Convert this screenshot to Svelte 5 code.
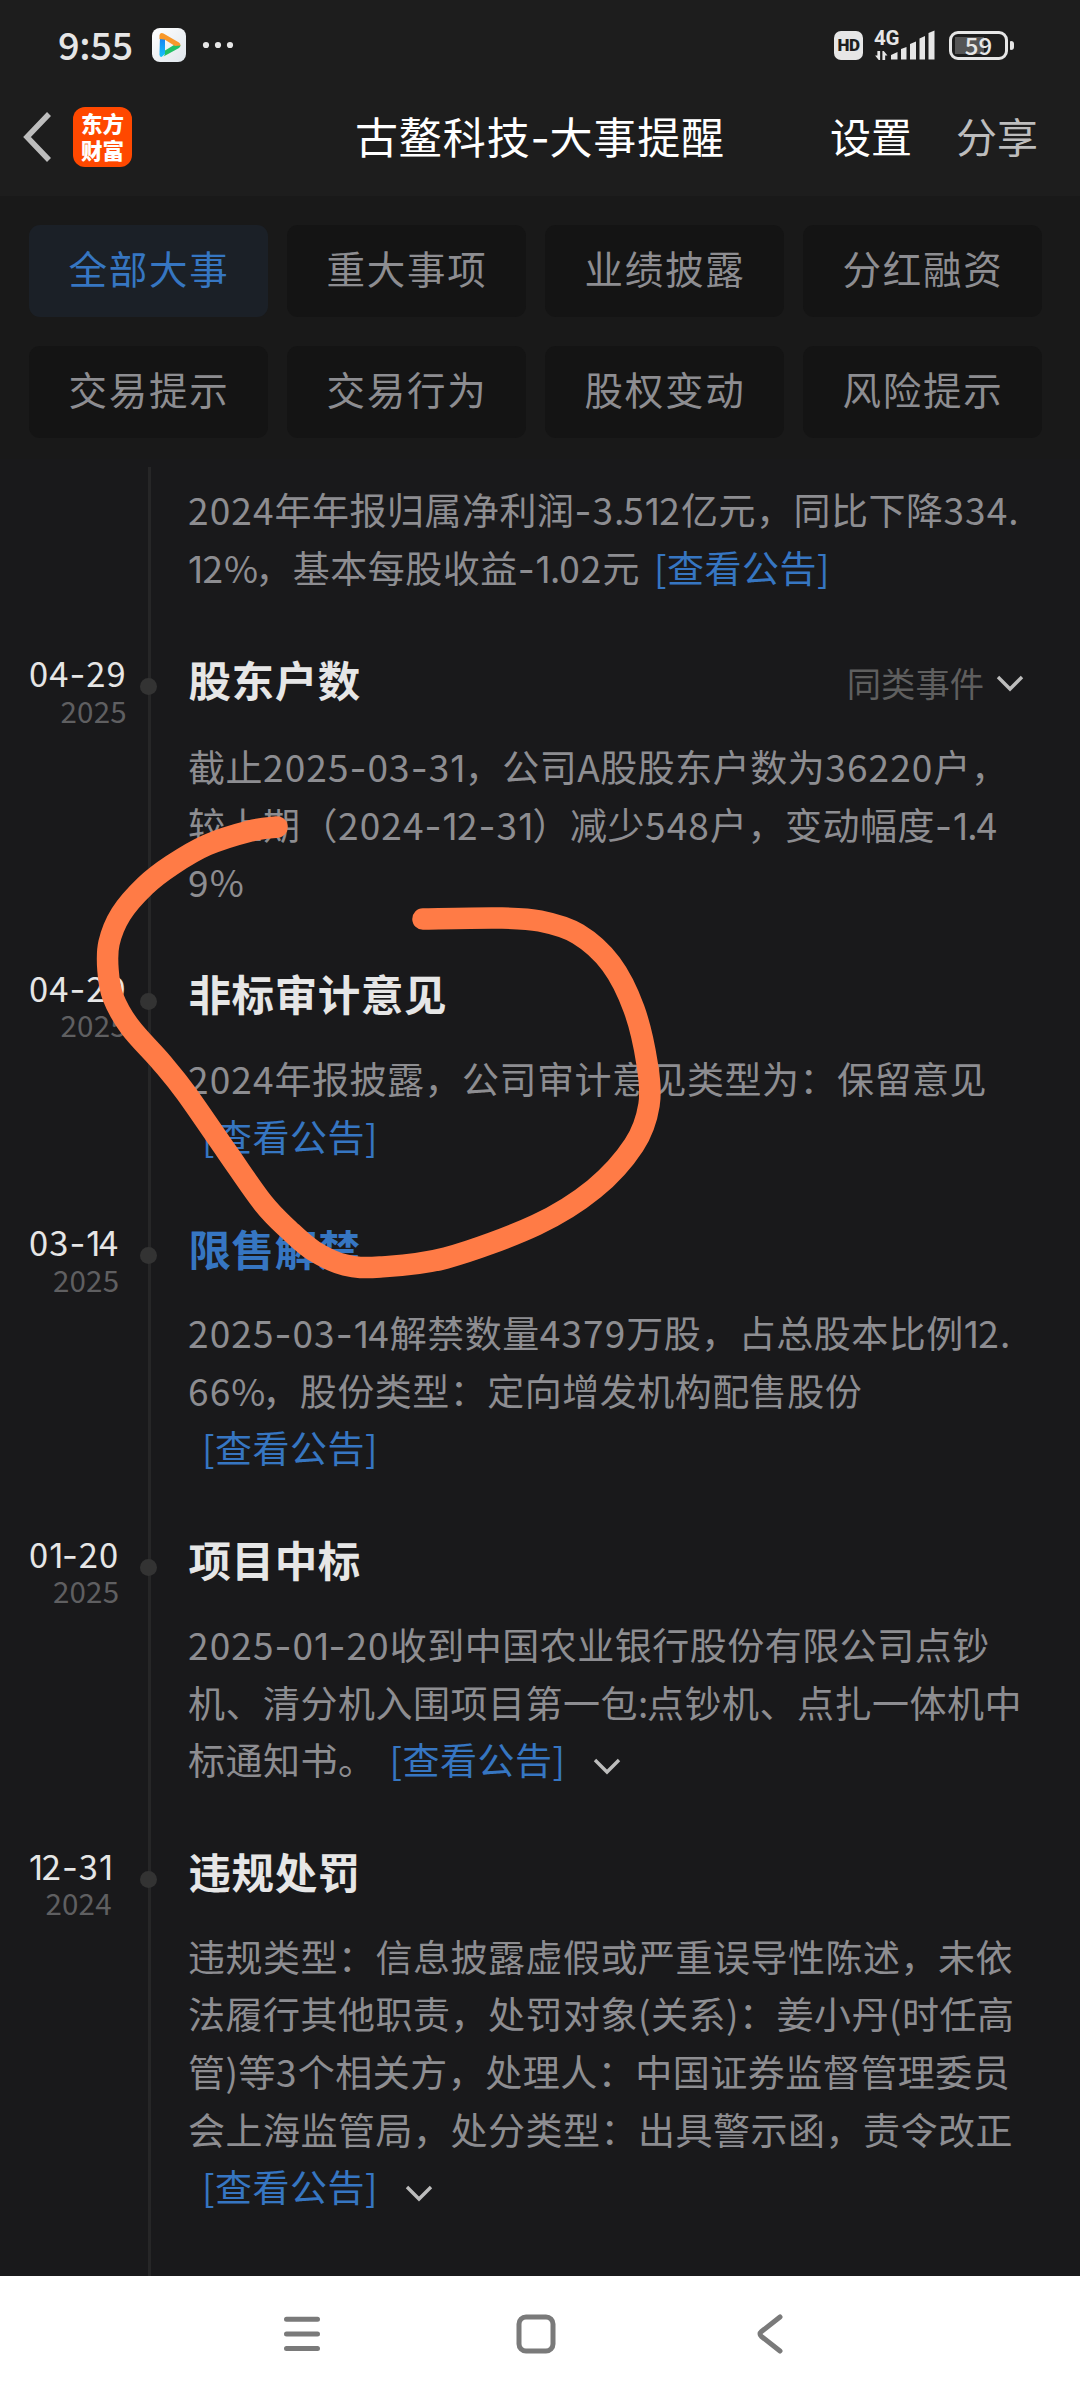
<script lang="ts">
  type Event = {
    day?: string;
    year?: string;
    title?: string;
    blue?: boolean;
    similar?: boolean;
    lines: string[];
    more?: boolean;
  };

  const tabs = [
    "全部大事",
    "重大事项",
    "业绩披露",
    "分红融资",
    "交易提示",
    "交易行为",
    "股权变动",
    "风险提示",
  ];
  let active = 0;

  const events: Event[] = [
    {
      lines: [
        "2024年年报归属净利润-3.512亿元，同比下降334.",
        "12%，基本每股收益-1.02元",
      ],
    },
    {
      day: "04-29",
      year: "2025",
      title: "股东户数",
      similar: true,
      lines: [
        "截止2025-03-31，公司A股股东户数为36220户，",
        "较上期（2024-12-31）减少548户，变动幅度-1.4",
        "9%",
      ],
    },
    {
      day: "04-29",
      year: "2025",
      title: "非标审计意见",
      lines: ["2024年报披露，公司审计意见类型为：保留意见", ""],
    },
    {
      day: "03-14",
      year: "2025",
      title: "限售解禁",
      blue: true,
      lines: [
        "2025-03-14解禁数量4379万股，占总股本比例12.",
        "66%，股份类型：定向增发机构配售股份",
        "",
      ],
    },
    {
      day: "01-20",
      year: "2025",
      title: "项目中标",
      more: true,
      lines: [
        "2025-01-20收到中国农业银行股份有限公司点钞",
        "机、清分机入围项目第一包:点钞机、点扎一体机中",
        "标通知书。",
      ],
    },
    {
      day: "12-31",
      year: "2024",
      title: "违规处罚",
      more: true,
      lines: [
        "违规类型：信息披露虚假或严重误导性陈述，未依",
        "法履行其他职责，处罚对象(关系)：姜小丹(时任高",
        "管)等3个相关方，处理人：中国证券监督管理委员",
        "会上海监管局，处分类型：出具警示函，责令改正",
        "",
      ],
    },
  ];

  // proportional spacing for latin glyphs between the chinese ones
  const kindOf = (t: string) => {
    if (t === "-") return "dash";
    if (t === "1") return "one";
    if (t === "." || t === ":") return "dot";
    if (t === "%") return "pct";
    return /^[02-9]+$/.test(t) ? "num" : "";
  };
  const runs = (text: string) =>
    text
      .split(/([-1.:%]|[02-9]+)/)
      .filter((t) => t)
      .map((t) => ({ text: t, kind: kindOf(t) }));

  const marker: Array<[number, number]> = [
    [277, 827],
    [250, 831],
    [207, 845],
    [172, 865],
    [145, 886],
    [121, 914],
    [109, 943],
    [108, 970],
    [113, 997],
    [130, 1027],
    [162, 1063],
    [186, 1093],
    [227, 1152],
    [263, 1203],
    [289, 1230],
    [314, 1251],
    [345, 1265],
    [380, 1267],
    [446, 1258],
    [536, 1225],
    [594, 1189],
    [634, 1145],
    [649, 1105],
    [647, 1063],
    [634, 1009],
    [611, 964],
    [578, 934],
    [540, 921],
    [499, 918],
    [423, 919],
  ];
  const smooth = (pts: Array<[number, number]>) => {
    let d = `M${pts[0][0]} ${pts[0][1]}`;
    for (let i = 0; i < pts.length - 1; i++) {
      const a = pts[i - 1] || pts[i];
      const b = pts[i];
      const c = pts[i + 1];
      const e = pts[i + 2] || c;
      d += `C${b[0] + (c[0] - a[0]) / 6} ${b[1] + (c[1] - a[1]) / 6}`;
      d += ` ${c[0] - (e[0] - b[0]) / 6} ${c[1] - (e[1] - b[1]) / 6}`;
      d += ` ${c[0]} ${c[1]}`;
    }
    return d;
  };
</script>

<div class="screen">
  <header>
    <div class="status">
      <span class="time">9:55</span>
      <svg class="player" width="34" height="34" viewBox="0 0 34 34">
        <defs>
          <linearGradient id="tile" x1="0" y1="0" x2="1" y2="1">
            <stop offset="0" stop-color="#ffffff" />
            <stop offset="1" stop-color="#dfe6ec" />
          </linearGradient>
          <linearGradient id="blue" x1="0" y1="0" x2="0" y2="1">
            <stop offset="0" stop-color="#1a78f0" />
            <stop offset="1" stop-color="#14c3fb" />
          </linearGradient>
        </defs>
        <rect width="34" height="34" rx="8" fill="url(#tile)" />
        <path d="M8 7.500 L13 9 V26 L9.500 29 Q7.500 29 7.500 26.500 Z" fill="url(#blue)" />
        <path d="M13 22.500 L22 17 L28.500 17 Q28.500 19 27 20 L11.500 28.500 Q13 27.500 13 25 Z" fill="#22c065" />
        <path d="M7.500 11 V7 Q8.500 4 11.500 5.500 L27 14.500 Q28.500 15.700 28.500 17.500 L23 18 L12.500 11.500 Z" fill="#f8982a" />
      </svg>
      <svg class="dots" width="32" height="8" viewBox="0 0 32 8">
        <circle cx="4" cy="4" r="3.100" />
        <circle cx="16" cy="4" r="3.100" />
        <circle cx="28" cy="4" r="3.100" />
      </svg>
      <span class="hd">HD</span>
      <div class="signal">
        <div class="net">
          <span>4G</span>
          <svg width="15" height="12" viewBox="0 0 15 12">
            <path d="M6 1 V11 H4.500 L0.500 6 H3 V1 Z M8.500 11 V1 H10 L14 6 H11.500 V11 Z" />
          </svg>
        </div>
        <svg width="46" height="30" viewBox="0 0 46 30">
          <path d="M1 29.500 V25 L7.500 22 V29.500 Z M11 29.500 V19 L16.500 17 V29.500 Z M20 29.500 V14 L26 11.500 V29.500 Z M29.500 29.500 V8.500 L35 6 V29.500 Z M38.500 29.500 V3 L44.500 0.500 V29.500 Z" />
        </svg>
      </div>
      <div class="battery"><span>59</span></div>
      <i class="tip"></i>
    </div>
    <div class="bar">
      <div class="left">
        <svg width="30" height="52" viewBox="0 0 30 52">
          <path d="M27 3 L5 26 L27 49" fill="none" stroke="#bdbdbd" stroke-width="5.500" />
        </svg>
        <div class="logo"><span>东方</span><span>财富</span></div>
      </div>
      <h1>古鳌科技<b>-</b>大事提醒</h1>
      <div class="right">
        <span class="set">设置</span>
        <span class="share">分享</span>
      </div>
    </div>
  </header>

  <div class="tabs">
    {#each tabs as tab, i}
      <button class:active={i === active} on:click={() => (active = i)}>{tab}</button>
    {/each}
  </div>

  <main>
    {#each events as ev}
      <section>
        {#if ev.title}
          <div class="when">
            <div class="date">
              <span class="day">{#each runs(ev.day) as r}<span class={r.kind}>{r.text}</span>{/each}</span>
              <span class="year">{ev.year}</span>
            </div>
            <i class="node"></i>
          </div>
        {/if}
        <div class="what">
          {#if ev.title}
            <div class="head" class:tall={ev.similar}>
              <h2 class:blue={ev.blue}>{ev.title}</h2>
              {#if ev.similar}
                <span class="similar">同类事件</span>
                <svg width="28" height="18" viewBox="0 0 28 18">
                  <path class="chev" d="M2 2 L14 14 L26 2" />
                </svg>
              {/if}
            </div>
          {/if}
          <div class="text">
            {#each ev.lines as line, i}
              <div class="line">
                {#each runs(line) as r}<span class={r.kind}>{r.text}</span>{/each}{#if i === ev.lines.length - 1 && !ev.similar}<a href="#top">[查看公告]</a>{/if}{#if i === ev.lines.length - 1 && ev.more}<svg class="more" width="28" height="18" viewBox="0 0 28 18"><path class="chev" d="M2 2 L14 14 L26 2" /></svg>{/if}
              </div>
            {/each}
          </div>
        </div>
      </section>
    {/each}
  </main>

  <nav>
    <svg width="40" height="40" viewBox="0 0 40 40">
      <path d="M4.500 5.300 H35.500 M4.500 20 H35.500 M4.500 34.600 H35.500" />
    </svg>
    <svg width="40" height="40" viewBox="0 0 40 40">
      <rect x="3" y="3" width="34" height="34" rx="7" />
    </svg>
    <svg width="40" height="40" viewBox="0 0 40 40">
      <path d="M30 3 L11.500 17.500 Q8.500 20 11.500 22.500 L30 37" />
    </svg>
  </nav>

  <!-- hand-drawn marker over the list -->
  <svg class="marker" width="1080" height="2400" viewBox="0 0 1080 2400">
    <path d={smooth(marker)} />
  </svg>
</div>

<style>
  :global(body) {
    background: #19191b;
  }
  .screen {
    position: relative;
    width: 1080px;
    height: 2400px;
    display: flex;
    flex-direction: column;
    overflow: hidden;
    background: #19191b;
    font-family: "Noto Sans CJK SC", sans-serif;
  }
  header {
    height: 196px;
    background: #1d1d1d;
  }
  .status {
    height: 90px;
    display: flex;
    align-items: center;
    padding: 0 66px 0 58px;
    box-sizing: border-box;
    fill: #e6e6e6;
    color: #e6e6e6;
  }
  .time {
    width: 94px;
    margin-top: -2px;
    font-size: 38px;
    line-height: 40px;
    font-weight: 500;
    letter-spacing: -0.4px;
  }
  .dots {
    margin-left: 16px;
    margin-right: auto;
  }
  .hd {
    width: 29px;
    height: 29px;
    border-radius: 7px;
    background: #e6e6e6;
    color: #1d1d1d;
    font: 900 17px/29px Roboto, sans-serif;
    letter-spacing: -0.5px;
    text-align: center;
  }
  .signal {
    display: flex;
    align-items: center;
    margin: 0 13px 0 11px;
  }
  .net {
    display: flex;
    flex-direction: column;
    width: 16px;
    height: 32px;
    font: bold 20.5px/19px Roboto, sans-serif;
    letter-spacing: -0.3px;
  }
  .net span {
    width: 30px;
  }
  .net svg {
    margin-top: 2px;
  }
  .battery {
    width: 59px;
    height: 29px;
    box-sizing: border-box;
    border: 3px solid #e6e6e6;
    border-radius: 9px;
    background: linear-gradient(#555, #555) 3px 3px / 29px 17px no-repeat;
    font: 500 24px/21px "Noto Sans CJK SC", sans-serif;
    text-align: center;
  }
  .tip {
    width: 4px;
    height: 9px;
    margin-left: 2px;
    border-radius: 1px 3px 3px 1px;
    background: #e6e6e6;
  }
  .bar {
    height: 94px;
    display: grid;
    grid-template-columns: 1fr auto 1fr;
    align-items: center;
  }
  .left {
    display: flex;
    align-items: center;
    padding-left: 22px;
    gap: 21px;
  }
  .logo {
    width: 59px;
    height: 60px;
    box-sizing: border-box;
    padding-bottom: 3px;
    border-radius: 12px;
    background: #ff4800;
    color: #fff;
    display: flex;
    flex-direction: column;
    align-items: center;
    justify-content: center;
    font-size: 21.5px;
    font-weight: 900;
    line-height: 27px;
  }
  h1 {
    margin: -4px 0 0;
    color: #fff;
    font-size: 43px;
    line-height: 60px;
    font-weight: 400;
    letter-spacing: 0.9px;
  }
  h1 b {
    font-family: Inter, sans-serif;
    font-size: 42px;
    line-height: 1;
    font-weight: 400;
    letter-spacing: -0.5px;
  }
  .right {
    display: flex;
    justify-content: flex-end;
    gap: 44px;
    margin-top: -4px;
    padding-right: 42px;
    font-size: 41px;
    line-height: 60px;
  }
  .set {
    color: #fff;
  }
  .share {
    color: #bdbdbd;
  }
  .tabs {
    height: 263px;
    box-sizing: border-box;
    padding: 29px 38px 0 29px;
    display: grid;
    grid-template-columns: repeat(4, 239px);
    grid-auto-rows: 92px;
    gap: 29px 19px;
    background: #191919;
  }
  button {
    border: 0;
    border-radius: 11px;
    padding: 0 0 8px 1px;
    background: #141414;
    color: #8d8d91;
    font-family: inherit;
    font-size: 38.5px;
    line-height: 60px;
    letter-spacing: 1.7px;
    white-space: nowrap;
  }
  button.active {
    background: #1b2027;
    color: #3676c2;
  }
  main {
    flex: 1;
    min-height: 0;
    margin-top: 8px;
    padding-top: 14px;
    background: linear-gradient(#262627, #262627) 148px 0 / 3px 100% no-repeat;
  }
  section {
    display: flex;
    justify-content: flex-end;
    padding-bottom: 54px;
  }
  .when {
    flex: 1;
    display: flex;
    align-items: flex-start;
    justify-content: space-between;
    padding: 0 31px 0 29px;
  }
  .date {
    display: flex;
    flex-direction: column;
    align-items: flex-end;
  }
  .day {
    color: #e6e6e6;
    font-size: 34.5px;
    line-height: 40px;
    margin-top: 2px;
  }
  .year {
    color: #5f5f61;
    font-size: 29.5px;
    line-height: 34px;
    letter-spacing: 0.2px;
  }
  .node {
    width: 17px;
    height: 17px;
    margin-top: 28px;
    border-radius: 50%;
    background: #333;
  }
  .what {
    width: 892px;
  }
  .head {
    height: 60px;
    display: flex;
    align-items: center;
    margin-bottom: 25px;
    padding-right: 56px;
  }
  .head.tall {
    margin-bottom: 28px;
  }
  h2 {
    flex: 1;
    margin: -3px 0 0 0.5px;
    color: #e6e6e6;
    font-size: 42.5px;
    line-height: 60px;
    font-weight: 700;
    letter-spacing: 0.6px;
  }
  h2.blue {
    color: #3676c2;
  }
  .similar {
    color: #5f5f5f;
    font-size: 34.3px;
    line-height: 50px;
    margin: 3px 12px 0 0;
  }
  .head svg {
    margin-top: 8px;
  }
  .chev {
    fill: none;
    stroke: #bdbdbd;
    stroke-width: 3.4;
  }
  .text {
    color: #8d8d91;
    font-size: 37px;
    letter-spacing: 0.5px;
  }
  .line {
    height: 57.6px;
    line-height: 57.6px;
    white-space: nowrap;
  }
  .num {
    letter-spacing: 1.1px;
  }
  .dash,
  .one {
    font-family: Inter, sans-serif;
    line-height: 1;
  }
  .dash {
    letter-spacing: 0.9px;
  }
  .one {
    letter-spacing: -0.6px;
  }
  .day .one {
    letter-spacing: -1.3px;
  }
  .dot {
    letter-spacing: -1.2px;
  }
  .pct {
    letter-spacing: -3px;
  }
  a {
    margin-left: 14px;
    color: #3676c2;
    text-decoration: none;
  }
  .more {
    margin-left: 27px;
    vertical-align: -1px;
  }
  nav {
    height: 124px;
    box-sizing: border-box;
    padding: 0 290px 8px 282px;
    display: flex;
    align-items: center;
    justify-content: space-between;
    background: #fff;
  }
  nav svg {
    fill: none;
    stroke: #7a7a7a;
    stroke-width: 5;
    stroke-linecap: round;
  }
  .marker {
    position: absolute;
    top: 0;
    left: 0;
    pointer-events: none;
    fill: none;
    stroke: #ff7b46;
    stroke-width: 21.5;
    stroke-linecap: round;
  }
</style>
